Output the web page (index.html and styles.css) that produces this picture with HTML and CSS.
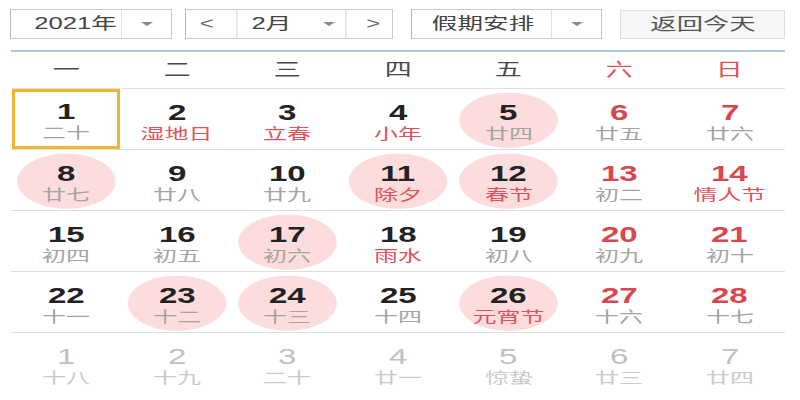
FILE: index.html
```html
<!DOCTYPE html>
<html lang="zh-CN">

<head>
    <meta charset="UTF-8">
    <title>万年历</title>
    <link rel="stylesheet" href="styles.css">
</head>

<body>
    <div class="calendar">
        <div class="toolbar">
            <div class="select year">
                <span class="label">2021年</span>
                <span class="drop"><i class="caret"></i></span>
            </div>
            <div class="select month">
                <span class="nav">&lt;</span>
                <span class="label">2月</span>
                <span class="drop inner"><i class="caret"></i></span>
                <span class="nav next">&gt;</span>
            </div>
            <div class="select holiday">
                <span class="label">假期安排</span>
                <span class="drop"><i class="caret"></i></span>
            </div>
            <div class="today-btn"><span class="label">返回今天</span></div>
        </div>

        <div class="weekdays">
            <span>一</span><span>二</span><span>三</span><span>四</span><span>五</span>
            <span class="wk">六</span><span class="wk">日</span>
        </div>

        <div class="days">
            <!-- 第一周 -->
            <div class="cell today"><b>1</b><em>二十</em></div>
            <div class="cell fest"><b>2</b><em>湿地日</em></div>
            <div class="cell fest"><b>3</b><em>立春</em></div>
            <div class="cell fest"><b>4</b><em>小年</em></div>
            <div class="cell rest"><b>5</b><em>廿四</em></div>
            <div class="cell wk"><b>6</b><em>廿五</em></div>
            <div class="cell wk"><b>7</b><em>廿六</em></div>
            <!-- 第二周 -->
            <div class="cell rest"><b>8</b><em>廿七</em></div>
            <div class="cell"><b>9</b><em>廿八</em></div>
            <div class="cell"><b>10</b><em>廿九</em></div>
            <div class="cell rest fest"><b>11</b><em>除夕</em></div>
            <div class="cell rest fest"><b>12</b><em>春节</em></div>
            <div class="cell wk"><b>13</b><em>初二</em></div>
            <div class="cell wk fest"><b>14</b><em>情人节</em></div>
            <!-- 第三周 -->
            <div class="cell"><b>15</b><em>初四</em></div>
            <div class="cell"><b>16</b><em>初五</em></div>
            <div class="cell rest"><b>17</b><em>初六</em></div>
            <div class="cell fest"><b>18</b><em>雨水</em></div>
            <div class="cell"><b>19</b><em>初八</em></div>
            <div class="cell wk"><b>20</b><em>初九</em></div>
            <div class="cell wk"><b>21</b><em>初十</em></div>
            <!-- 第四周 -->
            <div class="cell"><b>22</b><em>十一</em></div>
            <div class="cell rest"><b>23</b><em>十二</em></div>
            <div class="cell rest"><b>24</b><em>十三</em></div>
            <div class="cell"><b>25</b><em>十四</em></div>
            <div class="cell rest fest"><b>26</b><em>元宵节</em></div>
            <div class="cell wk"><b>27</b><em>十六</em></div>
            <div class="cell wk"><b>28</b><em>十七</em></div>
            <!-- 下个月 -->
            <div class="cell other"><b>1</b><em>十八</em></div>
            <div class="cell other"><b>2</b><em>十九</em></div>
            <div class="cell other"><b>3</b><em>二十</em></div>
            <div class="cell other"><b>4</b><em>廿一</em></div>
            <div class="cell other"><b>5</b><em>惊蛰</em></div>
            <div class="cell other"><b>6</b><em>廿三</em></div>
            <div class="cell other"><b>7</b><em>廿四</em></div>
        </div>
    </div>
</body>

</html>
```

FILE: styles.css
```css
html, body {
    margin: 0;
    background: #fff;
}

.calendar {
    width: 774px;
    padding: 9px 0 0 11px;
    font-family: "Liberation Sans", "Noto Sans CJK SC", sans-serif;
    color: #333;
}

/* 顶部工具栏 */
.toolbar {
    display: flex;
    height: 30px;
}

.select {
    display: flex;
    height: 28px;
    border: 1px solid #c9c9c9;
    border-left-color: #b5b5b5;
    background: #fff;
    font-size: 16px;
    line-height: 28px;
    color: #444;
}

.select .label {
    flex: 1;
    text-align: center;
    transform: scaleX(1.6);
}

.drop {
    width: 49px;
    border-left: 1px solid #e0e0e0;
    display: flex;
    align-items: center;
    justify-content: center;
}

.drop.inner {
    border-left: none;
    width: 50px;
}

.caret {
    width: 0;
    height: 0;
    border-left: 6px solid transparent;
    border-right: 6px solid transparent;
    border-top: 4px solid #8a8a8a;
}

.year {
    width: 160px;
    margin-left: -1px;
}

.year .label {
    padding-left: 12px;
}

.month {
    width: 206px;
    margin-left: 13px;
}

.month .nav {
    width: 44px;
    text-align: center;
    border-right: 1px solid #e0e0e0;
    color: #666;
    font-size: 17px;
    transform: scaleX(1.4);
}

.month .nav.next {
    width: 40px;
    border-right: none;
    border-left: 1px solid #e0e0e0;
}

.month .label {
    flex: none;
    width: 72px;
    padding-left: 5px;
}

.holiday {
    width: 189px;
    margin-left: 18px;
}

.holiday .label {
    padding-left: 2px;
}

.today-btn {
    width: 163px;
    height: 27px;
    margin-left: 18px;
    margin-top: 1px;
    border: 1px solid #dcdcdc;
    background: #f6f6f6;
    text-align: center;
    line-height: 27px;
    font-size: 17px;
    color: #555;
}

.today-btn .label {
    display: inline-block;
    transform: scaleX(1.55);
}

/* 星期栏 */
.weekdays {
    display: grid;
    grid-template-columns: repeat(7, 1fr);
    margin-top: 11px;
    height: 36px;
    border-top: 2px solid #a9cdd8;
    font-size: 18px;
    line-height: 36px;
    text-align: center;
    color: #4a4a4a;
}

.weekdays span {
    transform: scaleX(1.5);
}

.weekdays .wk {
    color: #dc5258;
}

/* 日期格子 */
.days {
    display: grid;
    grid-template-columns: repeat(7, 1fr);
    grid-auto-rows: 61px;
}

.cell {
    display: flex;
    flex-direction: column;
    align-items: center;
    padding-top: 13px;
    border-top: 1px solid #dedede;
}

.cell b {
    font-size: 22px;
    line-height: 22px;
    font-weight: bold;
    color: #222;
    transform: scaleX(1.5);
}

.cell em {
    font-style: normal;
    font-size: 15px;
    line-height: 18px;
    margin-top: 1px;
    color: #a4a4a4;
    transform: scaleX(1.6);
}

.cell.wk b {
    color: #d9464e;
}

.cell.fest em {
    color: #e05259;
}

.cell.rest {
    background: radial-gradient(ellipse 50px 28px at 50% 52%, #fcdcdc 97%, rgba(252, 220, 220, 0) 100%);
}

.cell.today {
    margin: 0 2px 0 1px;
    box-shadow: inset 0 0 0 3px #f2b62d;
    padding-top: 12px;
}

.cell.other b {
    font-weight: normal;
    color: #c0c0c0;
}

.cell.other em {
    color: #cacaca;
}
```
